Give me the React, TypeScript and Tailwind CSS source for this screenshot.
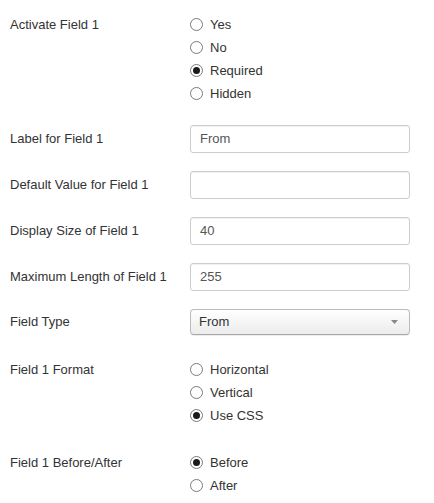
import React from 'react';

const font = { fontFamily: '"Liberation Sans", Arial, sans-serif' };

interface RadioGroupProps {
  options: string[];
  checked: string;
}

const RadioGroup: React.FC<RadioGroupProps> = ({ options, checked }) => (
  <div className="flex flex-col">
    {options.map((opt) => (
      <label key={opt} className="flex items-center h-[23px] text-[13px] text-[#333]">
        <span className="w-[13px] h-[13px] rounded-full border border-[#7a7a7a] bg-white flex items-center justify-center">
          {opt === checked && <span className="w-[7px] h-[7px] rounded-full bg-[#1a1a1a]" />}
        </span>
        <span className="ml-[7px]">{opt}</span>
      </label>
    ))}
  </div>
);

const TextInput: React.FC<{ value: string }> = ({ value }) => (
  <div className="w-[220px] h-[28px] border border-[#cccccc] rounded-[3px] bg-white flex items-center px-[9px] text-[13px] text-[#555] shadow-[inset_0_1px_1px_rgba(0,0,0,0.06)]">
    {value}
  </div>
);

const Row: React.FC<{ label: string; top?: boolean; className?: string; children: React.ReactNode }> = ({
  label,
  top,
  className,
  children,
}) => (
  <div className={`flex ${top ? 'items-start' : 'items-center'} ${className || ''}`}>
    <div className={`w-[180px] text-[13px] text-[#333] ${top ? 'h-[23px] flex items-center' : ''}`}>{label}</div>
    {children}
  </div>
);

export default function App() {
  return (
    <div className="w-[434px] h-[503px] bg-white pl-[10px] pt-[13px]" style={font}>
      <Row label="Activate Field 1" top>
        <RadioGroup options={['Yes', 'No', 'Required', 'Hidden']} checked="Required" />
      </Row>

      <Row label="Label for Field 1" className="mt-[20px]">
        <TextInput value="From" />
      </Row>
      <Row label="Default Value for Field 1" className="mt-[18px]">
        <TextInput value="" />
      </Row>
      <Row label="Display Size of Field 1" className="mt-[18px]">
        <TextInput value="40" />
      </Row>
      <Row label="Maximum Length of Field 1" className="mt-[18px]">
        <TextInput value="255" />
      </Row>

      <Row label="Field Type" className="mt-[18px]">
        <div className="w-[220px] h-[26px] border border-[#bbbbbb] border-b-[#a8a8a8] rounded-[4px] bg-gradient-to-b from-white to-[#ececec] flex items-center justify-between pl-[8px] pr-[11px] text-[13px] text-[#333] shadow-[0_1px_1px_rgba(0,0,0,0.08)]">
          <span>From</span>
          <svg width="7" height="4" viewBox="0 0 7 4">
            <path d="M0 0 L7 0 L3.5 4 Z" fill="#888" />
          </svg>
        </div>
      </Row>

      <Row label="Field 1 Format" top className="mt-[23px]">
        <RadioGroup options={['Horizontal', 'Vertical', 'Use CSS']} checked="Use CSS" />
      </Row>

      <Row label="Field 1 Before/After" top className="mt-[24px]">
        <RadioGroup options={['Before', 'After']} checked="Before" />
      </Row>
    </div>
  );
}
